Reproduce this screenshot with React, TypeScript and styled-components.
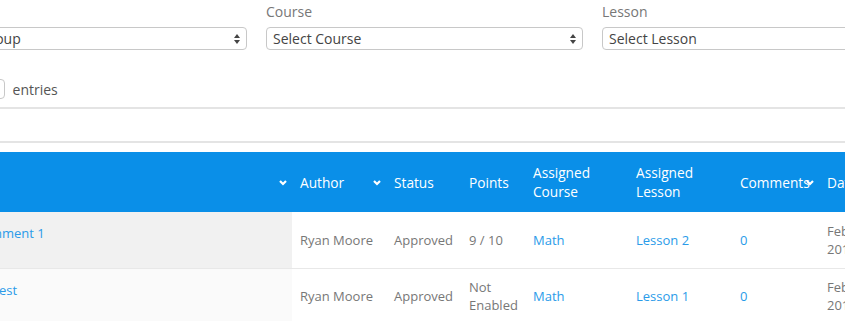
import * as React from 'react'
import styled, {createGlobalStyle} from 'styled-components'

const GlobalStyle = createGlobalStyle`
  html, body {
    margin: 0;
    padding: 0;
    background: #fff;
    overflow: hidden;
  }
  body {
    font-family: "Open Sans", "Liberation Sans", sans-serif;
    font-size: 13px;
    color: #777;
  }
`

const Page = styled.div`
  margin-left: -70px;
  width: 1010px;
  padding-top: 2px;
`

const Filters = styled.div`
  display: grid;
  grid-template-columns: repeat(3, 317px);
  column-gap: 19px;
  font-size: 14px;
`

const Field = styled.div`
  display: flex;
  flex-direction: column;
`

const Label = styled.label`
  line-height: 19px;
  color: #777;
  margin-bottom: 6px;
`

const SelectBox = styled.div`
  position: relative;
  height: 23px;
  box-sizing: border-box;
  border: 1px solid #c8c8c8;
  border-radius: 4px;
  padding: 0 22px 0 6px;
  display: flex;
  align-items: center;
  color: #444;
  background: #fff;
`

const Arrows = styled.svg`
  position: absolute;
  right: 6px;
  top: 6px;
`

const Select = ({children}: {children: React.ReactNode}) => (
  <SelectBox>
    {children}
    <Arrows width="6" height="10" viewBox="0 0 6 10">
      <polygon points="3,0 6,4 0,4" fill="#444" />
      <polygon points="0,6 6,6 3,10" fill="#444" />
    </Arrows>
  </SelectBox>
)

const LengthRow = styled.div`
  display: flex;
  align-items: center;
  gap: 8px;
  margin-top: 29px;
  height: 20px;
  font-size: 14px;
  color: #555;
`

const LengthBox = styled.div`
  width: 31px;
  height: 20px;
  box-sizing: border-box;
  border: 1px solid #c8c8c8;
  border-radius: 4px;
  padding-left: 4px;
  display: flex;
  align-items: center;
`

const SearchBar = styled.div`
  margin-top: 8px;
  height: 36px;
  box-sizing: border-box;
  border-top: 2px solid #e4e4e4;
  border-bottom: 2px solid #e4e4e4;
`

const Table = styled.table`
  margin-top: 9px;
  border-collapse: collapse;
  table-layout: fixed;
  width: 1010px;
`

const HeadCell = styled.th<{$w: number}>`
  position: relative;
  width: ${p => p.$w}px;
  height: 60px;
  box-sizing: border-box;
  padding: 0 8px;
  background: #0a8fe8;
  color: #fff;
  font-size: 13.7px;
  font-weight: 400;
  text-align: left;
  line-height: 19px;
`

const SortIcon = styled.svg`
  position: absolute;
  right: 5px;
  top: 28px;
`

const Row = styled.tr`
  border-top: 1px solid #e8e8e8;
  &:first-child {
    border-top: none;
  }
`

const Cell = styled.td<{$shade?: string}>`
  height: 56px;
  box-sizing: border-box;
  padding: 0 8px;
  line-height: 18px;
  color: #777;
  vertical-align: middle;
  background: ${p => p.$shade || '#fff'};
`

const TitleCell = styled(Cell)`
  vertical-align: top;
  padding: 12px 8px 0 33px;
`

const Line = styled.span`
  display: block;
  white-space: nowrap;
`

const Link = styled.a`
  color: #2a9be9;
  text-decoration: none;
`

const Chevron = () => (
  <SortIcon width="8" height="6" viewBox="0 0 8 6">
    <polyline points="1,1 4,4 7,1" fill="none" stroke="#fff" strokeWidth="2.2" />
  </SortIcon>
)

const columns = [
  {key: 'title', label: 'Title', w: 362, sort: true},
  {key: 'author', label: 'Author', w: 94, sort: true},
  {key: 'status', label: 'Status', w: 75},
  {key: 'points', label: 'Points', w: 64},
  {key: 'course', label: 'Assigned Course', w: 103},
  {key: 'lesson', label: 'Assigned Lesson', w: 104},
  {key: 'comments', label: 'Comments', w: 87, sort: true},
  {key: 'date', label: 'Date', w: 121},
]

const rows = [
  {title: 'Assignment 1', author: 'Ryan Moore', status: 'Approved', points: '9 / 10', course: 'Math', lesson: 'Lesson 2', comments: '0', date: ['Feb 15,', '2018'], shade: '#f1f1f1'},
  {title: 'Unit Test', author: 'Ryan Moore', status: 'Approved', points: 'Not Enabled', course: 'Math', lesson: 'Lesson 1', comments: '0', date: ['Feb 12,', '2018'], shade: '#fafafa'},
]

export default function App() {
  return (
    <Page>
      <GlobalStyle />
      <Filters>
        <Field>
          <Label>Group</Label>
          <Select>Select Group</Select>
        </Field>
        <Field>
          <Label>Course</Label>
          <Select>Select Course</Select>
        </Field>
        <Field>
          <Label>Lesson</Label>
          <Select>Select Lesson</Select>
        </Field>
      </Filters>
      <LengthRow>
        <span>Show</span>
        <LengthBox>10</LengthBox>
        <span>entries</span>
      </LengthRow>
      <SearchBar />
      <Table>
        <thead>
          <tr>
            {columns.map(c => (
              <HeadCell key={c.key} $w={c.w}>
                {c.label}
                {c.sort && <Chevron />}
              </HeadCell>
            ))}
          </tr>
        </thead>
        <tbody>
          {rows.map(r => (
            <Row key={r.title}>
              <TitleCell $shade={r.shade}>
                <Link href="#">{r.title}</Link>
              </TitleCell>
              <Cell>{r.author}</Cell>
              <Cell>{r.status}</Cell>
              <Cell>{r.points}</Cell>
              <Cell><Link href="#">{r.course}</Link></Cell>
              <Cell><Link href="#">{r.lesson}</Link></Cell>
              <Cell><Link href="#">{r.comments}</Link></Cell>
              <Cell>
                {r.date.map(d => <Line key={d}>{d}</Line>)}
              </Cell>
            </Row>
          ))}
        </tbody>
      </Table>
    </Page>
  )
}
